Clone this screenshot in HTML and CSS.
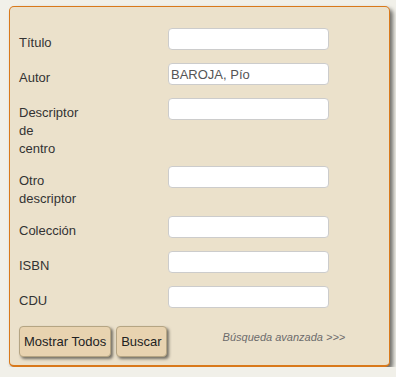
FILE: index.html
```html
<!DOCTYPE html>
<html lang="es">
<head>
    <meta charset="UTF-8">
    <meta name="viewport" content="width=device-width, initial-scale=1.0">
    <title>Búsqueda</title>
    <link rel="stylesheet" href="styles.css">
</head>
<body>
    <form class="search-panel" onsubmit="return false;">
        <div class="fields">
            <label class="field-label" for="titulo">Título</label>
            <div class="field-input"><input type="text" id="titulo"></div>

            <label class="field-label" for="autor">Autor</label>
            <div class="field-input"><input type="text" id="autor" value="BAROJA, Pío"></div>

            <label class="field-label" for="descriptor">Descriptor<br>de<br>centro</label>
            <div class="field-input"><input type="text" id="descriptor"></div>

            <label class="field-label" for="otro">Otro<br>descriptor</label>
            <div class="field-input"><input type="text" id="otro"></div>

            <label class="field-label" for="coleccion">Colección</label>
            <div class="field-input"><input type="text" id="coleccion"></div>

            <label class="field-label" for="isbn">ISBN</label>
            <div class="field-input"><input type="text" id="isbn"></div>

            <label class="field-label" for="cdu">CDU</label>
            <div class="field-input"><input type="text" id="cdu"></div>
        </div>
        <div class="actions">
            <button type="button">Mostrar Todos</button>
            <button type="submit">Buscar</button>
            <a class="advanced" href="#">Búsqueda avanzada &gt;&gt;&gt;</a>
        </div>
    </form>
</body>
</html>
```

FILE: styles.css
```css
body {
    margin: 0;
    padding: 6px 0 0 9px;
    background: #f1f0e9;
    font-family: 'Liberation Sans', Arial, sans-serif;
    font-size: 13px;
    color: #333333;
}

.search-panel {
    width: 381px;
    height: 361px;
    box-sizing: border-box;
    background: #ebe1cb;
    border: 1px solid #d9791b;
    border-bottom-width: 2px;
    border-radius: 5px;
    box-shadow: 3px 3px 4px rgba(0, 0, 0, 0.55);
    padding: 21px 0 0 9px;
}

.fields {
    display: grid;
    grid-template-columns: 149px 161px;
    align-items: start;
}

.field-label {
    line-height: 18px;
    padding: 6px 0 8px;
}

.field-input {
    padding-bottom: 13px;
}

.field-input input {
    display: block;
    width: 161px;
    height: 22px;
    box-sizing: border-box;
    margin: 0;
    padding: 1px 2px;
    border: 1px solid #cccccc;
    border-radius: 4px;
    background: #ffffff;
    font-family: 'Liberation Sans', Arial, sans-serif;
    font-size: 13px;
    color: #555555;
}

.actions {
    display: flex;
    align-items: center;
    gap: 5px;
    margin-top: 5px;
}

.actions button {
    height: 31px;
    padding: 0 4px;
    border: 1px solid #b5a583;
    border-radius: 4px;
    background: #e8d3b0;
    box-shadow: 2px 2px 3px rgba(0, 0, 0, 0.5);
    font-family: 'Liberation Sans', Arial, sans-serif;
    font-size: 13px;
    color: #222222;
    cursor: pointer;
}

.advanced {
    margin-left: 51px;
    margin-top: -9px;
    font-size: 11px;
    font-style: italic;
    color: #6b6b6b;
    text-decoration: none;
}
```
